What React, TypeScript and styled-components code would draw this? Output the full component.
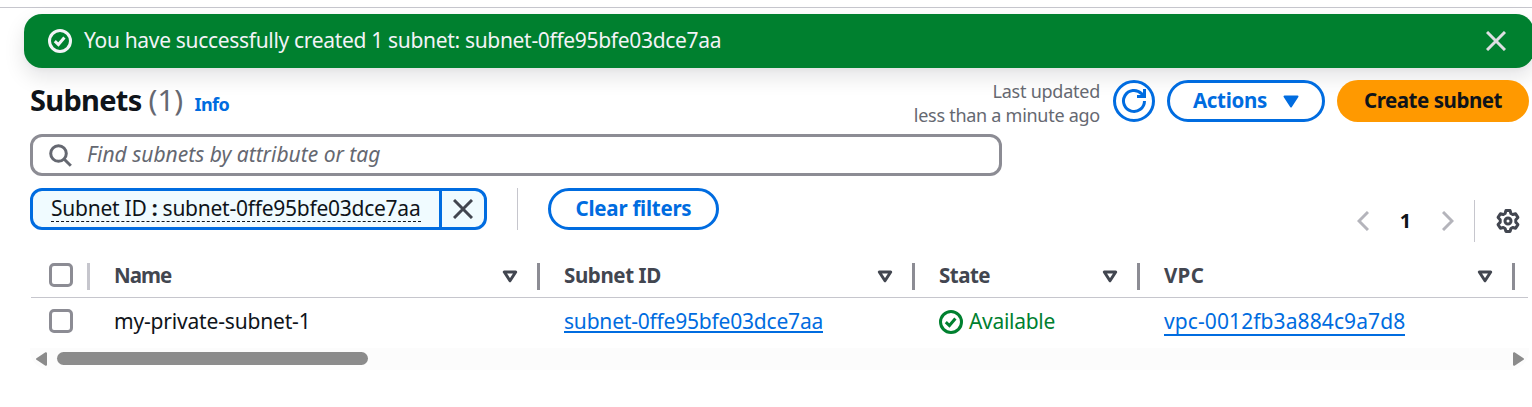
import React from 'react';
import styled, { createGlobalStyle, css } from 'styled-components';

const blue = '#006ce0';
const ink = '#0f141a';
const slate = '#424650';
const muted = '#656871';
const green = '#00802f';
const line = '#c6c6cd';

const GlobalStyle = createGlobalStyle`
  * { box-sizing: border-box; }
  html, body { margin: 0; background: #fff; overflow: hidden; }
  body {
    font-family: 'Noto Sans', 'Open Sans', sans-serif;
    font-size: 21px;
    line-height: 30px;
    color: ${ink};
  }
  svg { display: block; flex: none; }
`;

const Page = styled.div`
  width: 1532px;
  height: 407px;
  padding-top: 7px;
  overflow: hidden;
`;

const Label = styled.span<{ $track?: number }>`
  display: block;
  margin: -1px 0 1px;
  white-space: pre;
  letter-spacing: ${p => p.$track ?? 0}px;
`;

const PageEdge = styled.div`
  height: 1px;
  background: ${line};
`;

const Flashbar = styled.div`
  display: flex;
  align-items: center;
  width: 1510px;
  height: 54px;
  margin: 6px 0 0 24px;
  padding: 0 28px 0 24px;
  border-radius: 18px;
  background: ${green};
  color: #f3f3f7;
  box-shadow: 0 9px 20px 1px rgba(0, 7, 22, 0.1), 0 2px 5px rgba(0, 7, 22, 0.03);
`;

const FlashMessage = styled.div`
  display: flex;
  flex: 1;
  padding-left: 12px;
`;

const IconButton = styled.button`
  display: flex;
  padding: 0;
  border: 0;
  background: none;
  cursor: pointer;
`;

const Panel = styled.section`
  width: 1499px;
  margin: 12px 0 0 30px;
`;

const Header = styled.header`
  display: flex;
  align-items: flex-start;
  height: 54px;
`;

const Title = styled.h2`
  flex: 1;
  display: flex;
  align-items: baseline;
  margin: 0;
  font-size: 29px;
  line-height: 40px;
  font-weight: 700;
`;

const Counter = styled.span`
  width: 53px;
  padding-left: 7px;
  font-weight: 400;
  font-size: 29.5px;
  color: ${muted};
`;

const InfoLink = styled.a`
  font-size: 18px;
  color: ${blue};
`;

const Updated = styled.div`
  display: flex;
  flex-direction: column;
  align-items: flex-end;
  margin-right: 13px;
  font-size: 18px;
  line-height: 24px;
  color: ${muted};
`;

const outlined = css`
  border: 3px solid ${blue};
  background: #fff;
  color: ${blue};
`;

const Button = styled.button<{ $width: number; $primary?: boolean }>`
  display: flex;
  align-items: center;
  justify-content: center;
  gap: 16px;
  width: ${p => p.$width}px;
  height: 42px;
  padding: 0;
  border: 0;
  border-radius: 21px;
  background: #ff9900;
  color: ${ink};
  font: 700 20.5px/30px 'Noto Sans', sans-serif;
  ${p => !p.$primary && outlined}
`;

const Actions = styled.div`
  display: flex;
  gap: 12px;
`;

const SearchBox = styled.div`
  display: flex;
  align-items: center;
  gap: 15px;
  width: 972px;
  height: 42px;
  padding-left: 16px;
  border: 3px solid #8c8c94;
  border-radius: 12px;
  color: ${muted};
  font-style: italic;
`;

const FilterRow = styled.div`
  display: flex;
  height: 54px;
  margin-top: 12px;
`;

const Token = styled.div`
  display: flex;
  width: 457px;
  height: 42px;
  border: 3px solid ${blue};
  border-radius: 12px;
  background: #f0fbff;
`;

const TokenText = styled.div`
  flex: 1;
  padding-left: 18px;
`;

const TokenTrigger = styled.span`
  display: flex;
  width: 370px;
  height: 31px;
  line-height: 36px;
  border-bottom: 1px dashed ${ink};
`;

const TokenDismiss = styled.button`
  display: flex;
  align-items: center;
  justify-content: center;
  width: 45px;
  padding: 0;
  border: 0;
  border-left: 3px solid ${blue};
  background: none;
`;

const Rule = styled.div<{ $left: number; $right: number }>`
  width: 1px;
  height: 42px;
  margin: 0 ${p => p.$right}px 0 ${p => p.$left}px;
  background: ${line};
`;

const Pagination = styled.nav`
  display: flex;
  align-items: center;
  align-self: flex-end;
  height: 42px;
  margin: 0 9px 0 auto;
`;

const PageNumber = styled.span`
  width: 73px;
  text-align: center;
  font-weight: 700;
  font-size: 20px;
`;

const Grid = styled.div`
  display: grid;
  grid-template-columns: 60px 450px 375px 225px 375px;
`;

const HeaderRow = styled(Grid)`
  height: 56px;
  padding-top: 21px;
  margin: 0 1px;
  border-bottom: 1px solid ${line};
  & > :first-child { margin: 0 1px 0 -1px; }
`;

const BodyRow = styled(Grid)`
  height: 50px;
  align-items: center;
  padding-bottom: 2px;
`;

const SelectCell = styled.div<{ $divided?: boolean }>`
  display: flex;
  align-items: center;
  height: 27px;
  padding-left: 19px;
  padding-bottom: 3px;
  ${p => p.$divided && css`
    border-right: 3px solid ${line};
  `}
`;

const Checkbox = styled.span`
  width: 24px;
  height: 24px;
  border: 3px solid #8c8c94;
  border-radius: 5px;
  background: #fff;
`;

const HeadCell = styled.div`
  display: flex;
  align-items: center;
  justify-content: space-between;
  height: 27px;
  margin-left: -1px;
  margin-right: 1px;
  padding: 0 19px 1px 24px;
  border-right: 3px solid #8c8c94;
  color: ${slate};
  font-size: 20.5px;
  font-weight: 700;
`;

const Cell = styled.div`
  display: flex;
  align-items: center;
  padding-left: 24px;
`;

const Link = styled.a<{ $height: number }>`
  display: flex;
  height: ${p => p.$height}px;
  line-height: 30px;
  margin-bottom: ${p => 30 - p.$height}px;
  border-bottom: 2px solid ${blue};
  color: ${blue};
`;

const Status = styled.span`
  display: flex;
  align-items: center;
  gap: 6px;
  color: ${green};
`;

const Scrollbar = styled.div`
  display: flex;
  align-items: center;
  height: 22px;
  padding: 0 5px 1px 6px;
  border-radius: 0 0 20px 20px;
  background: #fcfcfc;
`;

const Thumb = styled.div`
  width: 311px;
  height: 13px;
  margin: 0 auto 0 10px;
  border-radius: 7px;
  background: #8b8b8b;
`;

const CheckCircle = () => (
  <svg width="24" height="24" viewBox="0 0 24 24" fill="none" stroke="currentColor" strokeWidth="3">
    <circle cx="12" cy="12" r="10.5" />
    <path d="M6.8 12.2l3.6 3.3 6-7" />
  </svg>
);

const Cross = ({ color }: { color: string }) => (
  <svg width="20" height="20" viewBox="0 0 20 20" fill="none" stroke={color} strokeWidth="3">
    <path d="M1 1l18 18M19 1L1 19" />
  </svg>
);

const Refresh = () => (
  <svg width="26" height="26" viewBox="0 0 26 26" fill="none" stroke="currentColor" strokeWidth="3">
    <path d="M23.5 13A10.5 10.5 0 1 1 20.5 5.6L23 8.6" />
    <path d="M23.5 1v7.5H16" />
  </svg>
);

const Search = () => (
  <svg width="23" height="23" viewBox="0 0 23 23" fill="none" stroke="currentColor" strokeWidth="3">
    <circle cx="9.5" cy="9.5" r="7.8" />
    <path d="M15 15l6.8 6.8" />
  </svg>
);

const CaretFilled = () => (
  <svg width="16" height="13" viewBox="0 0 16 13" fill="currentColor" stroke="currentColor" strokeWidth="2" strokeLinejoin="round">
    <path d="M1.5 1.5h13L8 11.5z" />
  </svg>
);

const SortCaret = () => (
  <svg width="16" height="13" viewBox="0 0 16 13" fill="none" stroke={slate} strokeWidth="3" strokeLinejoin="round">
    <path d="M2.3 2h11.4L8 10.8z" />
  </svg>
);

const Chevron = ({ right }: { right?: boolean }) => (
  <svg width="12" height="20" viewBox="0 0 12 20" fill="none" stroke="#b4b4bb" strokeWidth="3">
    <path d={right ? 'M1 1l9 9-9 9' : 'M11 1l-9 9 9 9'} />
  </svg>
);

const Gear = () => (
  <svg width="24" height="24" viewBox="0 0 24 24" fill="none" stroke={slate} strokeWidth="3" strokeLinejoin="round">
    <path d="M9.9 1.6h4.2l.8 2.9 1.8 1 2.9-.8 2.3 3.7-2.1 2.3v2.6l2.1 2.3-2.3 3.7-2.9-.8-1.8 1-.8 2.9H9.9l-.8-2.9-1.8-1-2.9.8-2.3-3.7 2.1-2.3v-2.6L2.1 8.4l2.3-3.7 2.9.8 1.8-1z" />
    <circle cx="12" cy="12" r="3" />
  </svg>
);

const ScrollArrow = ({ right }: { right?: boolean }) => (
  <svg width="11" height="14" viewBox="0 0 11 14" fill="#8b8b8b" stroke="#8b8b8b" strokeWidth="2" strokeLinejoin="round">
    <path d={right ? 'M1 1.2v11.6L10 7z' : 'M10 1.2v11.6L1 7z'} />
  </svg>
);

const columns = [
  { name: 'Name', track: -1.0 },
  { name: 'Subnet ID', track: -0.4 },
  { name: 'State', track: -0.5 },
  { name: 'VPC', track: 0.3 },
];

export default function App() {
  return (
    <>
      <GlobalStyle />
      <Page>
        <PageEdge />
        <Flashbar>
          <CheckCircle />
          <FlashMessage>
            <Label $track={-0.32}>You have successfully created 1 subnet: subnet-0ffe95bfe03dce7aa</Label>
          </FlashMessage>
          <IconButton aria-label="Dismiss"><Cross color="#dedee3" /></IconButton>
        </Flashbar>
        <Panel>
          <Header>
            <Title>
              <Label $track={-0.7}>Subnets</Label>
              <Counter>(1)</Counter>
              <InfoLink><Label $track={-0.6}>Info</Label></InfoLink>
            </Title>
            <Updated>
              <Label $track={-0.25}>Last updated</Label>
              <Label $track={-0.27}>less than a minute ago</Label>
            </Updated>
            <Actions>
              <Button $width={42} aria-label="Refresh"><Refresh /></Button>
              <Button $width={158}>
                <Label $track={-0.3}>Actions</Label>
                <CaretFilled />
              </Button>
              <Button $width={192} $primary><Label $track={-0.45}>Create subnet</Label></Button>
            </Actions>
          </Header>
          <SearchBox>
            <Search />
            <Label>Find subnets by attribute or tag</Label>
          </SearchBox>
          <FilterRow>
            <Token>
              <TokenText>
                <TokenTrigger>
                  <Label $track={-0.25}>Subnet ID <b>:</b> subnet-0ffe95bfe03dce7aa</Label>
                </TokenTrigger>
              </TokenText>
              <TokenDismiss aria-label="Remove filter"><Cross color={slate} /></TokenDismiss>
            </Token>
            <Rule $left={30} $right={30} />
            <Button $width={171}><Label $track={-0.25}>Clear filters</Label></Button>
            <Pagination>
              <Chevron />
              <PageNumber>1</PageNumber>
              <Chevron right />
              <Rule $left={20} $right={21} />
              <IconButton aria-label="Preferences"><Gear /></IconButton>
            </Pagination>
          </FilterRow>
          <HeaderRow>
            <SelectCell $divided><Checkbox /></SelectCell>
            {columns.map(c => (
              <HeadCell key={c.name}>
                <Label $track={c.track}>{c.name}</Label>
                <SortCaret />
              </HeadCell>
            ))}
          </HeaderRow>
          <BodyRow>
            <SelectCell><Checkbox /></SelectCell>
            <Cell><Label $track={-0.18}>my-private-subnet-1</Label></Cell>
            <Cell><Link $height={26}><Label $track={-0.2}>subnet-0ffe95bfe03dce7aa</Label></Link></Cell>
            <Cell>
              <Status><CheckCircle /><Label $track={-0.3}>Available</Label></Status>
            </Cell>
            <Cell><Link $height={29}><Label $track={0.1}>vpc-0012fb3a884c9a7d8</Label></Link></Cell>
          </BodyRow>
          <Scrollbar>
            <ScrollArrow />
            <Thumb />
            <ScrollArrow right />
          </Scrollbar>
        </Panel>
      </Page>
    </>
  );
}
